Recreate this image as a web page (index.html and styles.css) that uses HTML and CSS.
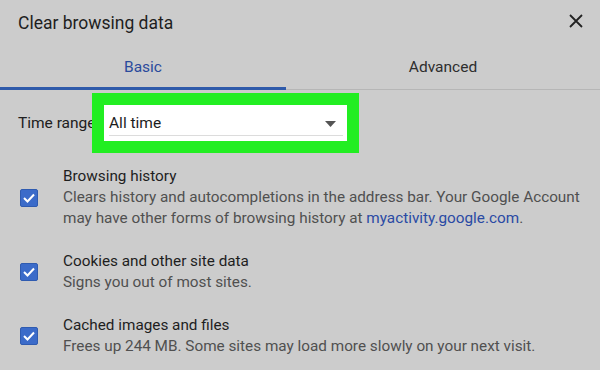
FILE: index.html
```html
<!DOCTYPE html>
<html lang="en">
<head>
<meta charset="utf-8">
<title>Clear browsing data</title>
<link rel="stylesheet" href="styles.css">
</head>
<body>
<div class="dialog">
  <div class="header">
    <div class="title">Clear browsing data</div>
    <svg class="close" width="14" height="14" viewBox="0 0 14 14" aria-label="Close">
      <path d="M1 1 L13 13 M13 1 L1 13" stroke="#222" stroke-width="1.8" fill="none"/>
    </svg>
  </div>
  <div class="tabs">
    <div class="tab tab-basic active">Basic</div>
    <div class="tab tab-adv">Advanced</div>
  </div>
  <div class="range-row">
    <div class="range-label">Time range</div>
    <div class="select">
      <div class="select-inner">
        <span class="select-value">All time</span>
        <svg class="arrow" width="11" height="6" viewBox="0 0 11 6"><path d="M0 0 H11 L5.5 6 Z" fill="#555"/></svg>
      </div>
    </div>
  </div>
  <div class="items">
    <div class="item">
      <div class="checkbox"><svg width="12" height="10" viewBox="0 0 12 10"><path d="M1 5 L4.5 8.5 L11 1.5" stroke="#fff" stroke-width="2" fill="none"/></svg></div>
      <div class="item-text">
        <div class="item-title">Browsing history</div>
        <div class="item-desc">Clears history and autocompletions in the address bar. Your Google Account<br>may have other forms of browsing history at <span class="link">myactivity.google.com</span>.</div>
      </div>
    </div>
    <div class="item">
      <div class="checkbox"><svg width="12" height="10" viewBox="0 0 12 10"><path d="M1 5 L4.5 8.5 L11 1.5" stroke="#fff" stroke-width="2" fill="none"/></svg></div>
      <div class="item-text">
        <div class="item-title">Cookies and other site data</div>
        <div class="item-desc">Signs you out of most sites.</div>
      </div>
    </div>
    <div class="item">
      <div class="checkbox"><svg width="12" height="10" viewBox="0 0 12 10"><path d="M1 5 L4.5 8.5 L11 1.5" stroke="#fff" stroke-width="2" fill="none"/></svg></div>
      <div class="item-text">
        <div class="item-title">Cached images and files</div>
        <div class="item-desc">Frees up 244 MB. Some sites may load more slowly on your next visit.</div>
      </div>
    </div>
  </div>
</div>
</body>
</html>
```

FILE: styles.css
```css
html, body {
  margin: 0;
  padding: 0;
}
body {
  width: 600px;
  height: 370px;
  overflow: hidden;
  background: #cccccc;
  font-family: Roboto, "Liberation Sans", Arial, sans-serif;
  color: #202020;
}
.dialog {
  width: 600px;
}
.header {
  height: 40px;
  box-sizing: border-box;
  padding: 13px 17px 0 18px;
  display: flex;
  justify-content: space-between;
  align-items: flex-start;
}
.title {
  font-size: 17.5px;
  line-height: 20px;
  color: #1e1e1e;
}
.close {
  margin-top: 1px;
  display: block;
}
.tabs {
  display: flex;
  border-bottom: 1px solid #b6b6b6;
}
.tab {
  height: 50px;
  margin-bottom: -1px;
  box-sizing: border-box;
  padding-top: 17px;
  text-align: center;
  font-size: 15.5px;
  line-height: 20px;
  color: #2e2e2e;
}
.tab-basic {
  width: 286px;
}
.tab-adv {
  flex: 1;
}
.tab.active {
  color: #2a4a9c;
  border-bottom: 3px solid #2f5aaa;
}
.range-row {
  display: flex;
  align-items: flex-start;
  padding: 15px 0 0 18px;
}
.range-label {
  width: 86px;
  flex: none;
  font-size: 15.5px;
  line-height: 20px;
  padding-top: 8px;
  white-space: nowrap;
}
.select {
  position: relative;
  width: 243px;
  height: 36px;
  box-sizing: border-box;
  background: #ffffff;
  padding: 0 4px 0 5px;
  outline: 12px solid #22ee22;
}
.select-inner {
  height: 31px;
  box-sizing: border-box;
  padding-top: 8px;
  border-bottom: 1px solid #dcdcdc;
  display: flex;
  justify-content: space-between;
  align-items: flex-start;
  font-size: 15.5px;
  line-height: 20px;
  color: #1c1c1c;
}
.arrow {
  display: block;
  margin: 8px 7px 0 0;
}
.items {
  padding: 25px 0 0 20px;
  display: flex;
  flex-direction: column;
  gap: 22px;
}
.item {
  display: flex;
  align-items: center;
}
.checkbox {
  width: 18px;
  height: 18px;
  box-sizing: border-box;
  flex: none;
  border-radius: 2px;
  background: #3b6bc9;
  border: 1px solid #2f5bb0;
  display: flex;
  align-items: center;
  justify-content: center;
  margin-right: 25px;
}
.checkbox svg {
  display: block;
}
.item-text {
  font-size: 15.3px;
  line-height: 21px;
  white-space: nowrap;
}
.item-title {
  color: #1e1e1e;
}
.item-desc {
  color: #505050;
}
.link {
  color: #2a4aa4;
}
```
